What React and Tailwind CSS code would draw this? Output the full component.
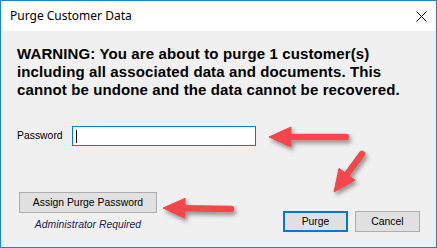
import React from 'react'

// ── 빨간 화살표 (주석용) ─────────────────────────────
function Arrow({ tail, tip, head = 22, half = 10 }) {
  const dx = tip[0] - tail[0]
  const dy = tip[1] - tail[1]
  const len = Math.hypot(dx, dy)
  const ux = dx / len
  const uy = dy / len
  const bx = tip[0] - ux * head
  const by = tip[1] - uy * head
  const px = -uy * half
  const py = ux * half
  const pts = `${tip[0]},${tip[1]} ${bx + px},${by + py} ${bx - px},${by - py}`
  return (
    <g>
      <line
        x1={tail[0]}
        y1={tail[1]}
        x2={bx + ux * 2}
        y2={by + uy * 2}
        stroke="#f2464b"
        strokeWidth="6.5"
        strokeLinecap="round"
      />
      <polygon points={pts} fill="#f2464b" strokeLinejoin="round" stroke="#f2464b" strokeWidth="1" />
    </g>
  )
}

function WinButton({ children, primary, className = '' }) {
  return (
    <button
      className={`h-[21px] bg-[#e1e1e1] text-[10.4px] text-black flex items-center justify-center ${
        primary ? 'border-2 border-[#0078d7]' : 'border border-[#adadad]'
      } ${className}`}
    >
      {children}
    </button>
  )
}

export default function App() {
  return (
    <div className="relative w-[437px] h-[248px] border border-[#1883d7] bg-[#f0f0f0] flex flex-col font-['Liberation_Sans',Arial,sans-serif] text-black overflow-hidden">
      {/* 타이틀 바 */}
      <div className="h-[30px] bg-white flex items-center justify-between pl-[9px] pr-[9px] shrink-0">
        <span className="text-[12px] font-['Noto_Sans',sans-serif] leading-none">Purge Customer Data</span>
        <svg width="11" height="11" viewBox="0 0 11 11">
          <path d="M0.5 0.5L10.5 10.5M10.5 0.5L0.5 10.5" stroke="#000" strokeWidth="1" />
        </svg>
      </div>

      {/* 본문 */}
      <div className="flex-1 flex flex-col pl-[16px] pr-[16px] pt-[14px]">
        <p className="font-bold text-[15px] leading-[18px] tracking-[0.12px]">
          WARNING: You are about to purge 1 customer(s)
          <br />
          including all associated data and documents. This
          <br />
          cannot be undone and the data cannot be recovered.
        </p>

        <div className="flex items-center mt-[27px] h-[20px]">
          <span className="w-[55px] text-[10.4px]">Password</span>
          <div className="w-[184px] h-[20px] bg-white border border-[#0078d7] flex items-center pl-[3px]">
            <span className="w-px h-[13px] bg-black" />
          </div>
        </div>

        <div className="flex justify-between items-start mt-[46px]">
          <div className="flex flex-col items-center ml-[2px] w-[138px]">
            <WinButton className="w-[138px]">Assign Purge Password</WinButton>
            <span className="mt-[5px] text-[10.4px] leading-[14px] italic text-[#1c1c50]">
              Administrator Required
            </span>
          </div>
          <div className="flex gap-[7px] mt-[19px]">
            <WinButton primary className="w-[65px]">Purge</WinButton>
            <WinButton className="w-[65px]">Cancel</WinButton>
          </div>
        </div>
      </div>

      {/* 화살표 오버레이 */}
      <svg className="absolute -left-px -top-px pointer-events-none" width="437" height="248">
        <defs>
          <filter id="sh" x="-20%" y="-20%" width="160%" height="160%">
            <feDropShadow dx="2" dy="3" stdDeviation="2" floodColor="#000" floodOpacity="0.4" />
          </filter>
        </defs>
        <g filter="url(#sh)">
          <Arrow tail={[346, 137]} tip={[269, 137]} />
          <Arrow tail={[362, 154]} tip={[334, 192]} />
          <Arrow tail={[231, 209]} tip={[163, 208]} />
        </g>
      </svg>
    </div>
  )
}
